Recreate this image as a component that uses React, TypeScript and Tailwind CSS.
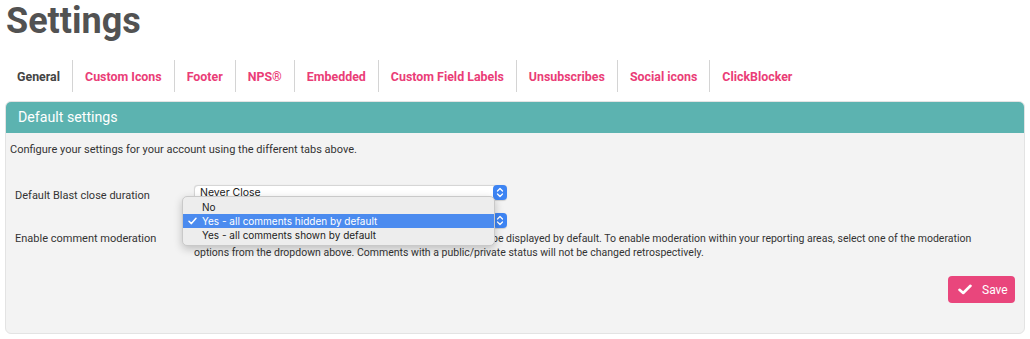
import React from 'react';

const tabs = [
  'General',
  'Custom Icons',
  'Footer',
  'NPS®',
  'Embedded',
  'Custom Field Labels',
  'Unsubscribes',
  'Social icons',
  'ClickBlocker',
];

const options = [
  'No',
  'Yes - all comments hidden by default',
  'Yes - all comments shown by default',
];

// macOS style up/down stepper on the right of a native select
function Stepper() {
  return (
    <div className="flex h-full w-[14px] items-center justify-center rounded-[4px] bg-[#3d84f3]">
      <svg width="8" height="11" viewBox="0 0 8 11" fill="none">
        <path d="M1.5 4 L4 1.5 L6.5 4" stroke="white" strokeWidth="1.3" strokeLinecap="round" strokeLinejoin="round" />
        <path d="M1.5 7 L4 9.5 L6.5 7" stroke="white" strokeWidth="1.3" strokeLinecap="round" strokeLinejoin="round" />
      </svg>
    </div>
  );
}

function NativeSelect({ value }: { value: string }) {
  return (
    <div className="flex h-[15px] w-[313px] items-stretch rounded-[4px] border border-[#d6d6d6] bg-white shadow-[0_0.5px_1px_rgba(0,0,0,0.15)]">
      <div className="flex-1 truncate pl-[5px] text-[10.5px] leading-[13px] text-[#222] [font-family:Inter,'Liberation_Sans',sans-serif]">
        {value}
      </div>
      <div className="-my-px -mr-px">
        <Stepper />
      </div>
    </div>
  );
}

export default function App() {
  return (
    <div className="h-[339px] w-full overflow-hidden bg-white [font-family:Roboto,'Liberation_Sans',sans-serif]">
      <h1 className="pl-[6px] text-[36px] font-bold leading-[42px] text-[#525252]">Settings</h1>

      {/* tabs */}
      <div className="mx-[5px] mt-[18px] flex h-[32px]">
        {tabs.map((t, i) => (
          <div
            key={t}
            className={`flex items-center px-[12px] pt-[2px] text-[12.4px] font-bold ${
              i < tabs.length - 1 ? 'border-r border-[#d4d4d4]' : ''
            } ${i === 0 ? 'text-[#444]' : 'text-[#ea3d77]'}`}
          >
            {t}
          </div>
        ))}
      </div>

      {/* panel */}
      <div className="mx-[5px] mt-[9px] h-[233px] overflow-hidden rounded-[6px] border border-[#e3e3e3] bg-[#f3f3f3]">
        <div className="flex h-[31px] items-center bg-[#5cb3b0] pl-[12px] text-[14.2px] text-white">
          Default settings
        </div>

        <div className="pl-[4px] pt-[10px] text-[11px] leading-[13px] text-[#333]">
          Configure your settings for your account using the different tabs above.
        </div>

        <div className="ml-[9px] mt-[29px] grid grid-cols-[179px_1fr] text-[11px] leading-[13px] text-[#333]">
          <div className="flex h-[15px] items-center pt-[5px]">Default Blast close duration</div>
          <div className="relative">
            <NativeSelect value="Never Close" />
            <div className="mt-[13px]">
              <NativeSelect value="Yes - all comments hidden by default" />
            </div>

            {/* open dropdown menu */}
            <div className="absolute left-[-12px] top-[11px] z-10 w-[313px] rounded-[5px] border border-[#c9c9c9] bg-[#ededed] py-[3px] shadow-[0_3px_8px_rgba(0,0,0,0.22)] [font-family:Inter,'Liberation_Sans',sans-serif]">
              {options.map((o, i) => (
                <div
                  key={o}
                  className={`flex h-[14px] items-center text-[10px] ${
                    i === 1 ? 'bg-[#4b8bef] text-white' : 'text-[#222]'
                  }`}
                >
                  <span className="flex w-[19px] justify-center">
                    {i === 1 && (
                      <svg width="9" height="8" viewBox="0 0 9 8" fill="none">
                        <path d="M1 4.3 L3.4 6.6 L8 1.2" stroke="white" strokeWidth="1.5" strokeLinecap="round" strokeLinejoin="round" />
                      </svg>
                    )}
                  </span>
                  {o}
                </div>
              ))}
            </div>
          </div>

          <div className="pt-[4px]">Enable comment moderation</div>
          <div className="pt-[4px] text-[10.5px] leading-[13.5px]">
            Currently, all comments made via your Blasts are public and will be displayed by default. To enable moderation within your reporting areas, select one of the moderation
            <br />
            options from the dropdown above. Comments with a public/private status will not be changed retrospectively.
          </div>
        </div>

        <div className="mr-[9px] mt-[17px] flex justify-end">
          <button className="flex h-[27px] w-[67px] items-center gap-[10px] rounded-[4px] bg-[#e9467c] pl-[10px] text-[12px] text-white">
            <svg width="14" height="11" viewBox="0 0 14 11" fill="none">
              <path d="M1.5 5.8 L5.2 9 L12.5 1.8" stroke="white" strokeWidth="2.6" strokeLinecap="round" strokeLinejoin="round" />
            </svg>
            Save
          </button>
        </div>
      </div>
    </div>
  );
}
